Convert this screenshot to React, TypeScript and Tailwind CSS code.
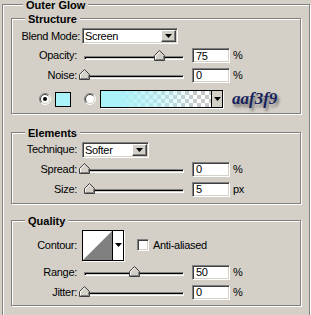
import React from "react";

function Group({
  title,
  className = "",
  titleClass = "ml-[13px]",
  children,
}: {
  title: string;
  className?: string;
  titleClass?: string;
  children?: React.ReactNode;
}) {
  return (
    <div
      className={`border border-[#808080] shadow-[1px_1px_0_#ffffff,inset_1px_1px_0_#ffffff] ${className}`}
    >
      <div
        className={`-mt-[6px] h-[13px] w-fit bg-[#d4d0c8] px-[3px] font-bold leading-[13px] tracking-normal ${titleClass}`}
      >
        {title}
      </div>
      {children}
    </div>
  );
}

function Label({ children }: { children: React.ReactNode }) {
  return <div className="w-[65px] shrink-0 text-right">{children}</div>;
}

function Sunken({ className = "", children }: { className?: string; children?: React.ReactNode }) {
  return (
    <div
      className={`border border-t-[#808080] border-l-[#808080] border-r-white border-b-white shadow-[inset_1px_1px_0_#404040,inset_-1px_-1px_0_#d4d0c8] ${className}`}
    >
      {children}
    </div>
  );
}

function Arrow() {
  return (
    <svg width="7" height="4" viewBox="0 0 7 4">
      <path d="M0 0h7L3.5 4z" fill="#000" />
    </svg>
  );
}

function Select({ value, width }: { value: string; width: string }) {
  return (
    <Sunken className={`flex h-[16px] items-center bg-white pl-[2px] pr-[1px] ${width}`}>
      <span className="leading-[12px]">{value}</span>
      <div className="ml-auto flex h-[12px] w-[15px] items-center justify-center border border-t-white border-l-white border-r-[#404040] border-b-[#404040] bg-[#d4d0c8] shadow-[inset_-1px_-1px_0_#808080]">
        <Arrow />
      </div>
    </Sunken>
  );
}

function Thumb() {
  return (
    <svg width="11" height="11" viewBox="0 0 11 11">
      <path d="M5.5 0.5L10.5 5.5V10.5H0.5V5.5Z" fill="#d4d0c8" stroke="#404040" strokeWidth="1" />
      <path d="M5.5 1.9L1.5 5.9V9.5" fill="none" stroke="#ffffff" strokeWidth="1" />
      <path d="M1.5 9.5H9.5V5.9" fill="none" stroke="#808080" strokeWidth="1" />
    </svg>
  );
}

function Slider({ value }: { value: number }) {
  return (
    <div className="relative ml-[7px] flex h-[12px] w-[100px] shrink-0 items-end pb-[2px]">
      <div className="h-[4px] w-full border border-t-[#808080] border-l-[#808080] border-r-white border-b-white bg-[#d4d0c8] shadow-[inset_1px_1px_0_#000000]" />
      <div className="absolute top-0" style={{ left: value - 5 }}>
        <Thumb />
      </div>
    </div>
  );
}

function Field({ value }: { value: string }) {
  return (
    <Sunken className="ml-[8px] flex h-[15px] w-[38px] shrink-0 items-center bg-white pl-[3px]">
      <span className="leading-[12px]">{value}</span>
    </Sunken>
  );
}

function SliderRow({
  label,
  value,
  unit,
  h = "h-[20px]",
}: {
  label: string;
  value: number;
  unit: string;
  h?: string;
}) {
  return (
    <div className={`flex items-center ${h}`}>
      <Label>{label}</Label>
      <Slider value={value} />
      <Field value={String(value)} />
      <span className="ml-[3px]">{unit}</span>
    </div>
  );
}

function Radio({ checked }: { checked?: boolean }) {
  return (
    <svg width="12" height="12" viewBox="0 0 12 12" className="shrink-0">
      <circle cx="6" cy="6" r="5" fill="#ffffff" />
      <path d="M9.9 2.1A5.5 5.5 0 0 0 2.1 9.9" fill="none" stroke="#808080" />
      <path d="M9.2 2.8A4.5 4.5 0 0 0 2.8 9.2" fill="none" stroke="#404040" />
      <path d="M9.9 2.1A5.5 5.5 0 0 1 2.1 9.9" fill="none" stroke="#ffffff" />
      <path d="M9.2 2.8A4.5 4.5 0 0 1 2.8 9.2" fill="none" stroke="#d4d0c8" />
      {checked && <circle cx="6" cy="6" r="2" fill="#000000" />}
    </svg>
  );
}

export default function App() {
  return (
    <div className="h-[315px] w-[311px] overflow-hidden bg-[#d4d0c8] pt-[4px] font-['Liberation_Sans',Arial,sans-serif] text-[11px] leading-[13px] tracking-[-0.3px] text-black">
      <Group title="Outer Glow" titleClass="ml-[12px]" className="ml-[2px] h-[330px] w-[308px] px-[8px]">
        <Group title="Structure" className="mt-[6px] w-[290px]">
          <div className="flex h-[20px] items-center">
            <div className="w-[68px] shrink-0 text-right">Blend Mode:</div>
            <div className="ml-[2px]">
              <Select value="Screen" width="w-[96px]" />
            </div>
          </div>
          <SliderRow label="Opacity:" value={75} unit="%" h="h-[19px]" />
          <SliderRow label="Noise:" value={0} unit="%" />
          <div className="flex h-[28px] items-center">
            <div className="ml-[27px]">
              <Radio checked />
            </div>
            <div className="ml-[4px] h-[15px] w-[16px] border border-black bg-[#aaf3f9]" />
            <div className="ml-[13px]">
              <Radio />
            </div>
            <div className="ml-[4px] flex h-[18px] w-[123px] border border-black shadow-[1px_1px_0_#ffffff]">
              <div className="flex-1 bg-[linear-gradient(to_right,#aaf3f9_15%,rgba(170,243,249,0.6)_50%,rgba(170,243,249,0)_88%),repeating-conic-gradient(#c8c8c8_0_25%,#ffffff_0_50%)] bg-[length:100%_100%,8px_8px]" />
              <div className="flex w-[11px] items-center justify-center border-l border-black bg-[#d4d0c8]">
                <Arrow />
              </div>
            </div>
            <span className="ml-[9px] font-['Liberation_Serif',serif] text-[17px] font-bold italic leading-[20px] tracking-normal text-[#15225e] [text-shadow:2px_3px_3px_rgba(0,0,0,0.45)]">
              aaf3f9
            </span>
          </div>
        </Group>

        <Group title="Elements" className="mt-[18px] w-[290px] pb-[4px]">
          <div className="flex h-[19px] items-center">
            <Label>Technique:</Label>
            <div className="ml-[5px]">
              <Select value="Softer" width="w-[67px]" />
            </div>
          </div>
          <SliderRow label="Spread:" value={0} unit="%" />
          <SliderRow label="Size:" value={5} unit="px" />
        </Group>

        <Group title="Quality" className="mt-[16px] w-[290px] pb-[3px]">
          <div className="flex h-[34px] items-center">
            <Label>Contour:</Label>
            <div className="ml-[5px] flex h-[31px] w-[42px] border border-black shadow-[1px_1px_0_#ffffff]">
              <svg width="29" height="29" viewBox="0 0 29 29" className="bg-white">
                <path d="M0 29L29 0V29Z" fill="#808080" />
              </svg>
              <div className="flex flex-1 items-center justify-center border-l border-black bg-white">
                <Arrow />
              </div>
            </div>
            <Sunken className="ml-[13px] h-[12px] w-[12px] bg-white" />
            <span className="ml-[4px]">Anti-aliased</span>
          </div>
          <SliderRow label="Range:" value={50} unit="%" />
          <SliderRow label="Jitter:" value={0} unit="%" />
        </Group>
      </Group>
    </div>
  );
}
